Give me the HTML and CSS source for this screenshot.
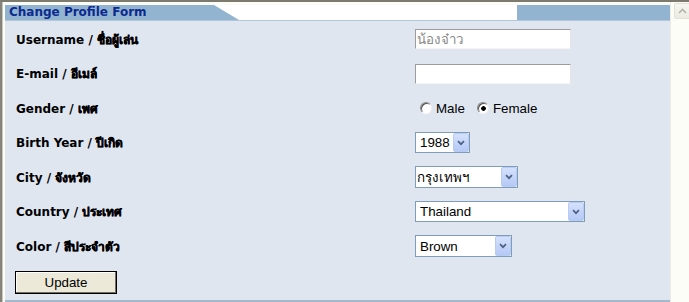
FILE: index.html
```html
<!DOCTYPE html>
<html>
<head>
<meta charset="utf-8">
<title>Change Profile Form</title>
<link rel="stylesheet" href="styles.css">
</head>
<body>
<div class="window">
  <div class="frame">
    <div class="panel">
      <div class="header">
        <div class="tab">Change Profile Form</div>
        <div class="hgap"></div>
        <div class="tail"></div>
      </div>
      <form class="form">
        <div class="row">
          <label class="lbl">Username / <span class="th">ชื่อผู้เล่น</span></label>
          <div class="ctl"><input class="text muted" type="text" value="น้องจ๋าว" readonly></div>
        </div>
        <div class="row">
          <label class="lbl">E-mail / <span class="th">อีเมล์</span></label>
          <div class="ctl"><input class="text" type="text" value=""></div>
        </div>
        <div class="row">
          <label class="lbl">Gender / <span class="th">เพศ</span></label>
          <div class="ctl radios">
            <label class="opt"><input type="radio" name="g" class="radio"><span>Male</span></label>
            <label class="opt"><input type="radio" name="g" class="radio" checked><span>Female</span></label>
          </div>
        </div>
        <div class="row">
          <label class="lbl">Birth Year / <span class="th">ปีเกิด</span></label>
          <div class="ctl">
            <div class="sel w-year"><select class="sel-in"><option>1988</option></select><span class="sel-btn"><svg width="8" height="6" viewBox="0 0 8 6"><path d="M1 1.2 L4 4.2 L7 1.2" stroke="#4d6185" stroke-width="1.7" fill="none"/></svg></span></div>
          </div>
        </div>
        <div class="row">
          <label class="lbl">City / <span class="th">จังหวัด</span></label>
          <div class="ctl">
            <div class="sel w-city"><select class="sel-in thai"><option>กรุงเทพฯ</option></select><span class="sel-btn"><svg width="8" height="6" viewBox="0 0 8 6"><path d="M1 1.2 L4 4.2 L7 1.2" stroke="#4d6185" stroke-width="1.7" fill="none"/></svg></span></div>
          </div>
        </div>
        <div class="row">
          <label class="lbl">Country / <span class="th">ประเทศ</span></label>
          <div class="ctl">
            <div class="sel w-country"><select class="sel-in"><option>Thailand</option></select><span class="sel-btn"><svg width="8" height="6" viewBox="0 0 8 6"><path d="M1 1.2 L4 4.2 L7 1.2" stroke="#4d6185" stroke-width="1.7" fill="none"/></svg></span></div>
          </div>
        </div>
        <div class="row">
          <label class="lbl">Color / <span class="th">สีประจำตัว</span></label>
          <div class="ctl">
            <div class="sel w-color"><select class="sel-in"><option>Brown</option></select><span class="sel-btn"><svg width="8" height="6" viewBox="0 0 8 6"><path d="M1 1.2 L4 4.2 L7 1.2" stroke="#4d6185" stroke-width="1.7" fill="none"/></svg></span></div>
          </div>
        </div>
        <div class="actions">
          <button type="button" class="btn">Update</button>
        </div>
      </form>
    </div>
  </div>
  <div class="scroll">
    <div class="sb-up"><svg width="9" height="6" viewBox="0 0 9 6"><path d="M1 5 L4.5 1.5 L8 5" stroke="#b4b4aa" stroke-width="1.6" fill="none"/></svg></div>
  </div>
</div>
</body>
</html>
```
FILE: styles.css
```css
html, body {
  margin: 0;
  padding: 0;
  background: #fdfdf8;
}
body {
  font-family: "DejaVu Sans", "Liberation Sans", sans-serif;
}
.window {
  width: 689px;
  height: 302px;
  box-sizing: border-box;
  display: flex;
  overflow: hidden;
  background: #fdfdf8;
  border-top: 2px solid #7d7a70;
  border-left: 2px solid #85837a;
}
.frame {
  padding: 3px 0 0 3px;
  box-shadow: inset 1px 0 #c9c6bb;
}
.panel {
  width: 665px;
  height: 297px;
  box-sizing: border-box;
  background: #dfe6f0;
  border-bottom: 2px solid #a3b8cd;
  display: flex;
  flex-direction: column;
}
.header {
  display: flex;
  height: 16px;
  box-sizing: border-box;
  border-bottom: 1px solid #b4c7da;
  background: #fff;
}
.tab {
  width: 234px;
  background: #92b4d0;
  color: #0c2a8e;
  font-weight: bold;
  font-size: 12px;
  line-height: 15px;
  padding-left: 4px;
  box-sizing: border-box;
  white-space: nowrap;
  clip-path: polygon(0 0, 209px 0, 100% 100%, 0 100%);
}
.hgap {
  flex: 1;
  background: #fff;
}
.tail {
  width: 153px;
  background: #92b4d0;
}
.form {
  margin: 0;
  padding: 1px 0 0 11px;
}
.row {
  display: grid;
  grid-template-columns: 399px 1fr;
  align-items: center;
  height: 34.5px;
}
.lbl {
  font-weight: bold;
  font-size: 12px;
  color: #000;
  white-space: nowrap;
}
.th {
  -webkit-text-stroke: 0.45px #000;
}
.ctl {
  display: flex;
  align-items: center;
}
.text {
  width: 156px;
  height: 20px;
  box-sizing: border-box;
  margin: 0;
  padding: 0 1px;
  border: 1px solid;
  border-color: #9c9c9c #e4e4e4 #f4f4f4 #9c9c9c;
  background: #fff;
  font-family: "Liberation Sans", sans-serif;
  font-size: 13.33px;
  color: #000;
  outline: none;
}
.muted {
  color: #8a8a8a;
}
.radios {
  padding-left: 5px;
  font-family: "Liberation Sans", sans-serif;
  font-size: 13.33px;
}
.opt {
  display: flex;
  align-items: center;
  margin-right: 12px;
}
.radio {
  appearance: none;
  -webkit-appearance: none;
  width: 12px;
  height: 12px;
  margin: 0 4px 0 0;
  border-radius: 50%;
  box-sizing: border-box;
  border: 1px solid;
  border-color: #8a8a8a #f0f0f0 #f8f8f8 #8a8a8a;
  background: #fff;
  box-shadow: inset 1px 1px 0 #505050;
}
.radio:checked {
  background: radial-gradient(circle at 55% 55%, #000 0 2px, #fff 2.6px);
}
.sel {
  position: relative;
  display: inline-block;
  height: 21px;
}
.w-year { width: 55px; }
.w-city { width: 103px; height: 22px; }
.w-country { width: 170px; }
.w-color { width: 97px; height: 22px; }
.sel-in {
  appearance: none;
  -webkit-appearance: none;
  width: 100%;
  height: 100%;
  box-sizing: border-box;
  margin: 0;
  padding: 0 0 0 4px;
  border: 1px solid #7f9db9;
  border-radius: 0;
  background: #fff;
  font-family: "Liberation Sans", sans-serif;
  font-size: 13.33px;
  color: #000;
  outline: none;
}
.sel-in.thai {
  padding-left: 1px;
}
.sel-btn {
  position: absolute;
  right: 1px;
  top: 1px;
  bottom: 1px;
  width: 16px;
  box-sizing: border-box;
  border: 1px solid #b8cbf5;
  border-radius: 2px;
  background: linear-gradient(#d5e1fc, #b5c9f6);
  display: flex;
  align-items: center;
  justify-content: center;
  pointer-events: none;
}
.actions {
  padding-top: 7.5px;
  margin-left: -1px;
}
.btn {
  width: 102px;
  height: 23px;
  box-sizing: border-box;
  margin: 0;
  padding: 0;
  background: #ece9d8;
  border: 1px solid #000;
  box-shadow: inset -1px -1px 0 #716f64, inset 1px 1px 0 #fff;
  font-family: "Liberation Sans", sans-serif;
  font-size: 13.33px;
  color: #000;
}
.scroll {
  width: 19px;
  padding: 1px 0 0 4px;
  box-sizing: border-box;
  box-shadow: inset 3px 0 0 -2px #ecebe4;
}
.sb-up {
  width: 17px;
  height: 16px;
  box-sizing: border-box;
  border: 1px solid #e2e1d8;
  border-radius: 2px;
  background: linear-gradient(#f7f6f1, #ebeae3);
  display: flex;
  align-items: center;
  justify-content: center;
}
```
